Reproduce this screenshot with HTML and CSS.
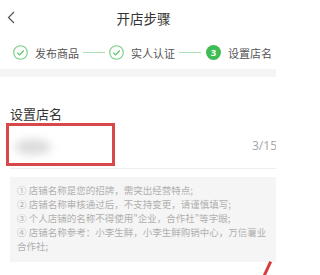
FILE: index.html
```html
<!DOCTYPE html>
<html lang="zh">
<head>
<meta charset="utf-8">
<link rel="stylesheet" href="styles.css">
</head>
<body>
<div class="page">
  <header class="nav">
    <svg class="back" width="10" height="14" viewBox="0 0 10 14"><polyline points="7,1 1.5,6.5 7,12" fill="none" stroke="#555" stroke-width="1.2"/></svg>
    <div class="title">开店步骤</div>
  </header>
  <div class="steps">
    <svg class="ico" width="15" height="15" viewBox="0 0 15 15"><circle cx="7.5" cy="7.5" r="6.8" fill="none" stroke="#72cf80" stroke-width="1.1"/><polyline points="4.3,7.6 6.6,9.9 10.8,5.5" fill="none" stroke="#55c466" stroke-width="1.1"/></svg>
    <span class="stext">发布商品</span>
    <span class="sline"></span>
    <svg class="ico" width="15" height="15" viewBox="0 0 15 15"><circle cx="7.5" cy="7.5" r="6.8" fill="none" stroke="#72cf80" stroke-width="1.1"/><polyline points="4.3,7.6 6.6,9.9 10.8,5.5" fill="none" stroke="#55c466" stroke-width="1.1"/></svg>
    <span class="stext">实人认证</span>
    <span class="sline"></span>
    <span class="num">3</span>
    <span class="stext">设置店名</span>
  </div>
  <div class="band"></div>
  <section class="form">
    <div class="label">设置店名</div>
    <div class="inrow">
      <span class="blur"></span>
      <span class="count">3/15</span>
      <span class="mark"></span>
    </div>
    <div class="tips">
      <p>① 店铺名称是您的招牌，需突出经营特点;</p>
      <p>② 店铺名称审核通过后，不支持变更，请谨慎填写;</p>
      <p>③ 个人店铺的名称不得使用"企业，合作社"等字眼;</p>
      <p>④ 店铺名称参考：小李生鲜，小李生鲜购销中心，万信薯业合作社;</p>
    </div>
  </section>
  <span class="slash"></span>
</div>
</body>
</html>
```
FILE: styles.css
```css
html, body {
  margin: 0;
  padding: 0;
  background: #fff;
  overflow: hidden;
}
body {
  width: 276px;
  height: 275px;
}
.page {
  position: relative;
  width: 287px;
  height: 275px;
  font-family: "Noto Sans CJK SC", "Noto Sans", sans-serif;
  color: #333;
}
.nav {
  position: relative;
  height: 36px;
  display: flex;
  align-items: center;
  justify-content: center;
}
.back {
  position: absolute;
  left: 7px;
  top: 11px;
}
.title {
  font-size: 13.5px;
  line-height: 36px;
  color: #333;
}
.steps {
  height: 33px;
  display: flex;
  align-items: center;
  padding-left: 13px;
}
.ico {
  flex: none;
  display: block;
}
.stext {
  font-size: 11px;
  color: #555;
  margin-left: 7px;
  line-height: 14px;
}
.sline {
  width: 22px;
  height: 1px;
  background: #a6e0ae;
  margin: 0 4px;
}
.num {
  width: 15px;
  height: 15px;
  border-radius: 50%;
  background: #3fbd52;
  color: #fff;
  font-family: "Noto Sans", sans-serif;
  font-size: 9.5px;
  font-weight: bold;
  line-height: 15px;
  text-align: center;
  margin-left: 1px;
}
.band {
  height: 8px;
  background: #f5f5f5;
}
.form {
  padding: 0 10px;
}
.label {
  margin-top: 29px;
  font-size: 13px;
  line-height: 16px;
  color: #333;
}
.inrow {
  position: relative;
  height: 45px;
  margin-top: 1px;
  border-bottom: 1px solid #efefef;
  display: flex;
  align-items: center;
  justify-content: space-between;
}
.blur {
  width: 36px;
  height: 16px;
  margin-left: 5px;
  margin-top: 2px;
  border-radius: 50%;
  background: #dcdcdc;
  filter: blur(4px);
}
.count {
  font-family: "Noto Sans", sans-serif;
  font-size: 12px;
  color: #aaa;
}
.mark {
  position: absolute;
  left: -4px;
  top: 0;
  width: 103px;
  height: 37px;
  border: 3px solid #d94848;
}
.tips {
  margin-top: 8px;
  background: #f5f5f5;
  padding: 6px 4px 9px 7px;
  font-size: 9.5px;
  line-height: 14px;
  color: #b0b0b0;
}
.tips p {
  margin: 0;
}
.slash {
  position: absolute;
  left: 266px;
  top: 261px;
  width: 3px;
  height: 15px;
  background: #d93a3a;
  transform: rotate(25deg);
}
```
